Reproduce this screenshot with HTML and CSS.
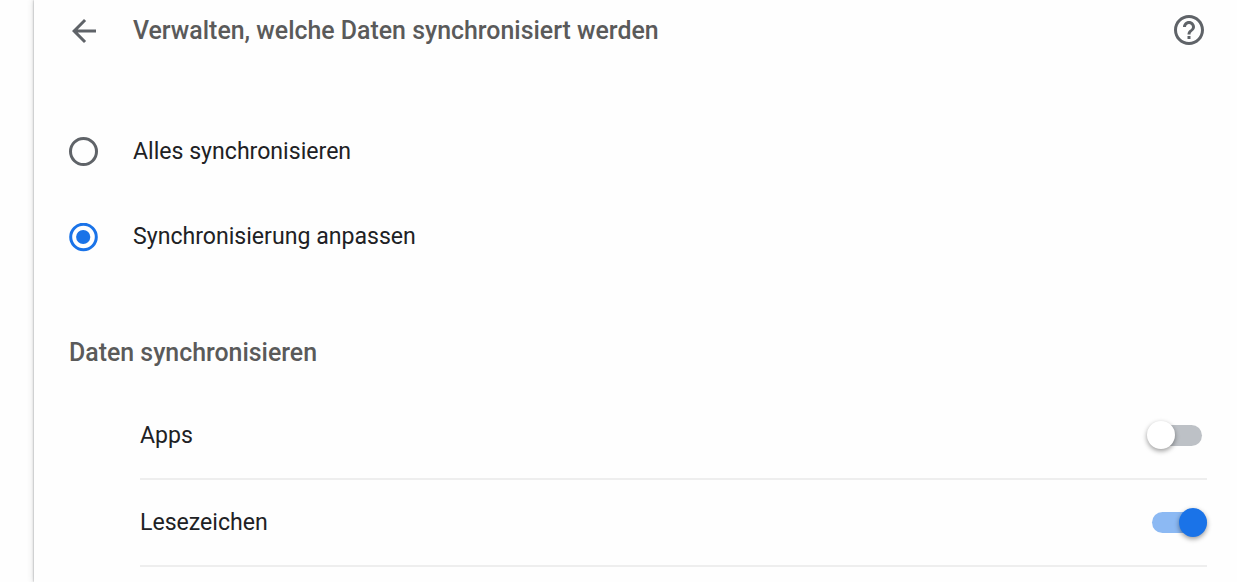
FILE: index.html
```
<!DOCTYPE html>
<html lang="de">
<head>
    <meta charset="UTF-8">
    <title>Einstellungen</title>
    <link rel="stylesheet" href="styles.css">
</head>
<body>
    <main class="card">
        <header class="header">
            <svg class="icon" viewBox="0 0 24 24"><path d="M20 11H7.83l5.59-5.59L12 4l-8 8 8 8 1.41-1.41L7.83 13H20v-2z"/></svg>
            <h1 class="title">Verwalten, welche Daten synchronisiert werden</h1>
            <svg class="icon help" viewBox="0 0 24 24"><path d="M11 18h2v-2h-2v2zm1-16C6.48 2 2 6.48 2 12s4.48 10 10 10 10-4.48 10-10S17.52 2 12 2zm0 18c-4.41 0-8-3.59-8-8s3.59-8 8-8 8 3.59 8 8-3.59 8-8 8zm0-14c-2.21 0-4 1.79-4 4h2c0-1.1.9-2 2-2s2 .9 2 2c0 2-3 1.75-3 5h2c0-2.25 3-2.5 3-5 0-2.21-1.79-4-4-4z"/></svg>
        </header>
        <div class="options">
            <div class="option">
                <svg class="radio" viewBox="0 0 29 29"><circle cx="14.5" cy="14.5" r="13"/></svg>
                <span class="text">Alles synchronisieren</span>
            </div>
            <div class="option">
                <svg class="radio checked" viewBox="0 0 29 29"><circle cx="14.5" cy="14" r="12.8"/><circle class="dot" cx="14.2" cy="14" r="7.1"/></svg>
                <span class="text">Synchronisierung anpassen</span>
            </div>
        </div>
        <h2 class="title">Daten synchronisieren</h2>
        <div class="list">
            <div class="row">
                <span class="text">Apps</span>
                <span class="toggle"><span class="knob"></span></span>
            </div>
            <div class="row">
                <span class="text">Lesezeichen</span>
                <span class="toggle on"><span class="knob"></span></span>
            </div>
        </div>
    </main>
</body>
</html>
```
FILE: styles.css
```
* {
    box-sizing: border-box;
}
body {
    margin: 0;
    height: 582px;
    overflow: hidden;
    background: #fefefe;
    font-family: Roboto, sans-serif;
    color: #202124;
}
.card {
    height: 582px;
    margin-left: 34px;
    padding: 0 30px 0 35px;
    background: #fefefe;
    box-shadow: 0 0 2px rgba(60, 64, 67, 0.5), 0 0 7px rgba(60, 64, 67, 0.2);
}
.header {
    display: flex;
    align-items: center;
    height: 61px;
    margin-left: -3px;
}
.icon {
    width: 36px;
    height: 36px;
    fill: #5f6368;
}
.help {
    margin-bottom: 1px;
}
.title {
    margin: 0;
    font-size: 24.9px;
    font-weight: 500;
    line-height: 30px;
    color: #5a5a5a;
}
.header .title {
    flex: 1;
    margin-left: 31px;
}
.options {
    padding: 109px 0 58px;
    margin-top: -61px;
}
.option {
    display: flex;
    align-items: center;
    height: 85.5px;
}
.radio {
    width: 29px;
    height: 29px;
    margin-right: 35px;
    fill: none;
    stroke: #5f6368;
    stroke-width: 3;
}
.radio.checked {
    stroke: #1a73e8;
}
.dot {
    fill: #1a73e8;
    stroke: none;
}
.text {
    padding-bottom: 0.4px;
    font-size: 23.1px;
    line-height: 30px;
}
.list {
    margin: 25px 0 0 71px;
}
.row {
    display: flex;
    align-items: center;
    justify-content: space-between;
    height: 87px;
    border-bottom: 2px solid #eeeeee;
}
.row .text {
    padding-bottom: 0;
}
.toggle {
    display: flex;
    align-items: center;
    width: 52px;
    height: 21px;
    margin-right: 5px;
    border-radius: 11px;
    background: #bdc1c6;
}
.knob {
    width: 28px;
    height: 28px;
    margin: 0 0 1px -3px;
    border-radius: 50%;
    background: #fff;
    box-shadow: 0 2px 5px rgba(0, 0, 0, 0.4);
}
.toggle.on {
    justify-content: flex-end;
    width: 55px;
    margin-right: 0;
    background: #8cb9f3;
}
.on .knob {
    width: 28px;
    height: 29px;
    margin: 0;
    background: #1a73e8;
}
```
